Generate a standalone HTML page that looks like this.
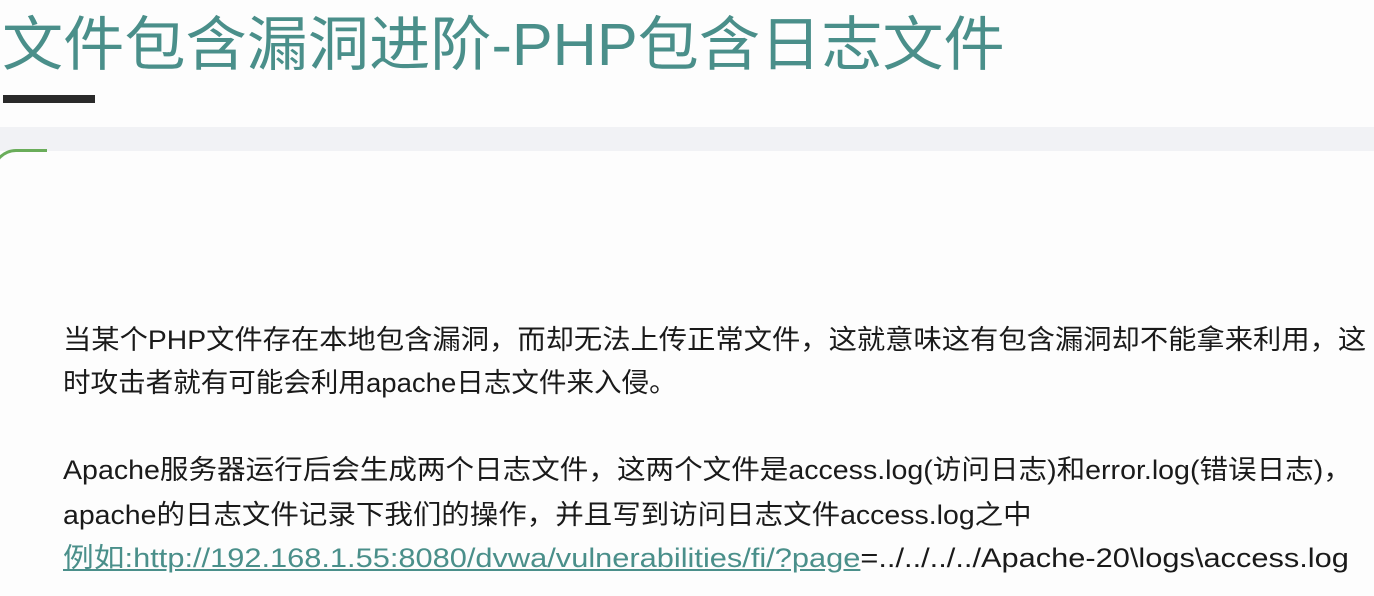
<!DOCTYPE html>
<html><head><meta charset="utf-8"><style>
body{margin:0;width:1374px;height:596px;background:#fdfdfd;position:relative;overflow:hidden;font-family:"Liberation Sans","Noto Sans CJK SC",sans-serif;}
.t{position:absolute;left:2px;top:5px;font-size:59px;color:#4a8f8a;white-space:nowrap;line-height:80px;transform:scaleX(1.037);transform-origin:left;}
.bar{position:absolute;left:3px;top:95px;width:92px;height:8px;background:#2a2a2a;}
.band{position:absolute;left:0;top:127px;width:1374px;height:24px;background:#f1f2f5;}
.arc{position:absolute;left:-8px;top:149px;width:52px;height:40px;border-top:3px solid #6aad5a;border-left:3px solid #6aad5a;border-top-left-radius:24px;}
.l{position:absolute;left:63px;font-size:27px;color:#1a1a1a;white-space:nowrap;line-height:30px;transform-origin:left;}
a{color:#4a8f8a;text-decoration:underline;}
</style></head><body>
<div class="t">文件包含漏洞进阶-PHP包含日志文件</div>
<div class="bar"></div>
<div class="band"></div>
<div class="arc"></div>
<div class="l" style="top:325px;transform:scaleX(1.048)">当某个PHP文件存在本地包含漏洞，而却无法上传正常文件，这就意味这有包含漏洞却不能拿来利用，这</div>
<div class="l" style="top:368px;transform:scaleX(1.02)">时攻击者就有可能会利用apache日志文件来入侵。</div>
<div class="l" style="top:455px;transform:scaleX(1.058)">Apache服务器运行后会生成两个日志文件，这两个文件是access.log(访问日志)和error.log(错误日志)，</div>
<div class="l" style="top:500px;transform:scaleX(1.055)">apache的日志文件记录下我们的操作，并且写到访问日志文件access.log之中</div>
<div class="l" style="top:543px;transform:scaleX(1.14)"><a>例如:http://192.168.1.55:8080/dvwa/vulnerabilities/fi/?page</a>=../../../../Apache-20\logs\access.log</div>
</body></html>
